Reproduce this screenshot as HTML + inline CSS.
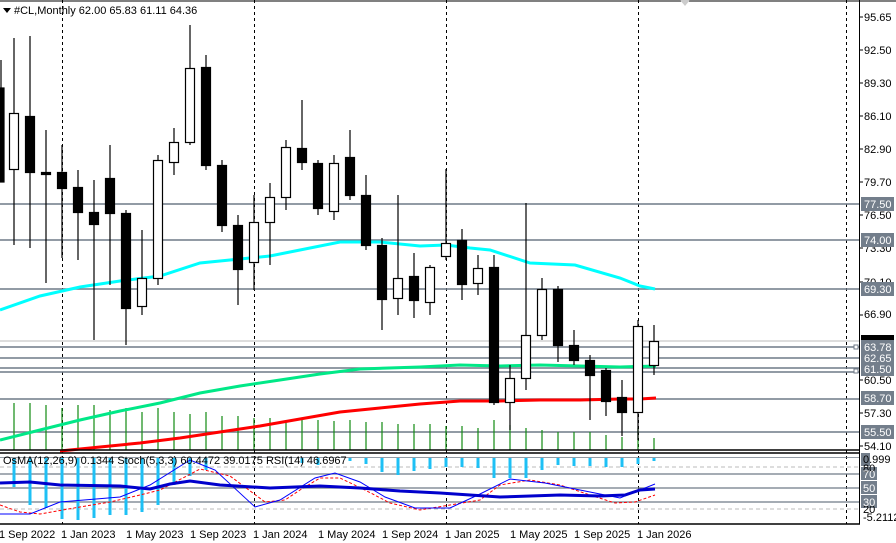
<!DOCTYPE html>
<html><head><meta charset="utf-8"><style>
html,body{margin:0;padding:0;background:#fff;}
svg{display:block;font-family:"Liberation Sans",sans-serif;font-size:11px;}
</style></head><body>
<svg width="896" height="543" viewBox="0 0 896 543" xmlns="http://www.w3.org/2000/svg">
<rect width="896" height="543" fill="#fff"/>
<!-- vertical dashed grid -->
<g stroke="#000" stroke-dasharray="3,3" stroke-width="1">
<line x1="62.5" y1="0" x2="62.5" y2="524"/>
<line x1="254.5" y1="0" x2="254.5" y2="524"/>
<line x1="446.5" y1="0" x2="446.5" y2="524"/>
<line x1="638.5" y1="0" x2="638.5" y2="524"/>
<line x1="846.5" y1="0" x2="846.5" y2="524"/>
</g>
<!-- horizontal level lines -->
<g stroke="#6f7a87" stroke-width="1.5">
<line x1="0" y1="204" x2="859" y2="204"/>
<line x1="0" y1="240" x2="859" y2="240"/>
<line x1="0" y1="289" x2="859" y2="289"/>
<line x1="0" y1="347" x2="859" y2="347"/>
<line x1="0" y1="358" x2="859" y2="358"/>
<line x1="0" y1="368" x2="859" y2="368"/>
<line x1="0" y1="372" x2="859" y2="372"/>
<line x1="0" y1="399" x2="859" y2="399"/>
<line x1="0" y1="432" x2="859" y2="432"/>
</g>
<line x1="0" y1="341" x2="859" y2="341" stroke="#bbb"/>
<rect x="854" y="345" width="4" height="4" fill="#fff" stroke="#6f7a87"/>
<rect x="854" y="369" width="4" height="4" fill="#fff" stroke="#6f7a87"/>
<!-- volume bars -->
<g stroke="#108a10" stroke-width="1.2">
<line x1="14" y1="450" x2="14" y2="403"/><line x1="30" y1="450" x2="30" y2="403"/><line x1="46" y1="450" x2="46" y2="405"/><line x1="62" y1="450" x2="62" y2="408"/><line x1="78" y1="450" x2="78" y2="405"/><line x1="94" y1="450" x2="94" y2="405"/><line x1="110" y1="450" x2="110" y2="410"/><line x1="126" y1="450" x2="126" y2="408"/><line x1="142" y1="450" x2="142" y2="412"/><line x1="158" y1="450" x2="158" y2="408"/><line x1="174" y1="450" x2="174" y2="412"/><line x1="190" y1="450" x2="190" y2="414"/><line x1="206" y1="450" x2="206" y2="412"/><line x1="222" y1="450" x2="222" y2="416"/><line x1="238" y1="450" x2="238" y2="416"/><line x1="254" y1="450" x2="254" y2="418"/><line x1="270" y1="450" x2="270" y2="418"/><line x1="286" y1="450" x2="286" y2="420"/><line x1="302" y1="450" x2="302" y2="420"/><line x1="318" y1="450" x2="318" y2="420"/><line x1="334" y1="450" x2="334" y2="421"/><line x1="350" y1="450" x2="350" y2="420"/><line x1="366" y1="450" x2="366" y2="422"/><line x1="382" y1="450" x2="382" y2="422"/><line x1="398" y1="450" x2="398" y2="424"/><line x1="414" y1="450" x2="414" y2="424"/><line x1="430" y1="450" x2="430" y2="424"/><line x1="446" y1="450" x2="446" y2="426"/><line x1="462" y1="450" x2="462" y2="426"/><line x1="478" y1="450" x2="478" y2="428"/><line x1="494" y1="450" x2="494" y2="420"/><line x1="510" y1="450" x2="510" y2="425"/><line x1="526" y1="450" x2="526" y2="428"/><line x1="542" y1="450" x2="542" y2="430"/><line x1="558" y1="450" x2="558" y2="432"/><line x1="574" y1="450" x2="574" y2="432"/><line x1="590" y1="450" x2="590" y2="432"/><line x1="606" y1="450" x2="606" y2="435"/><line x1="622" y1="450" x2="622" y2="437"/><line x1="638" y1="450" x2="638" y2="428"/><line x1="654" y1="450" x2="654" y2="438"/>
</g>
<!-- MAs -->
<polyline fill="none" stroke="#00ffff" stroke-width="3" points="0,310 40,296 80,287 120,281 160,276 200,263 240,259 270,256 300,250 340,242 380,242 420,246 446,245 470,248 490,250 530,263 575,265 620,278 640,286 655,289"/>
<polyline fill="none" stroke="#00e887" stroke-width="3" points="0,440 40,430 80,420 120,411 160,403 200,393 240,386 280,380 320,374 360,369 420,367 460,365 500,366 540,365 580,366 620,367 656,366"/>
<polyline fill="none" stroke="#ff0000" stroke-width="3" points="60,451 100,447 140,443 180,438 220,432 260,426 300,419 340,412 380,408 420,404 460,401 500,401 540,400 580,400 620,399 640,399 656,398"/>
<!-- candles -->
<g stroke="#000" stroke-width="1.2">
<line x1="1" y1="60" x2="1" y2="182"/><rect x="-4" y="88" width="8" height="94" fill="#000"/>
<line x1="14" y1="38" x2="14" y2="245"/><rect x="9.5" y="113.5" width="9" height="56" fill="#fff"/>
<line x1="30" y1="36" x2="30" y2="248"/><rect x="25.5" y="116.5" width="9" height="56" fill="#000"/>
<line x1="46" y1="130" x2="46" y2="283"/><rect x="41.5" y="172.5" width="9" height="2" fill="#000"/>
<line x1="62" y1="145" x2="62" y2="258"/><rect x="57.5" y="172.5" width="9" height="16" fill="#000"/>
<line x1="78" y1="170" x2="78" y2="260"/><rect x="73.5" y="187.5" width="9" height="25" fill="#000"/>
<line x1="94" y1="180" x2="94" y2="340"/><rect x="89.5" y="212.5" width="9" height="12" fill="#000"/>
<line x1="110" y1="145" x2="110" y2="285"/><rect x="105.5" y="178.5" width="9" height="35" fill="#000"/>
<line x1="126" y1="210" x2="126" y2="345"/><rect x="121.5" y="213.5" width="9" height="95" fill="#000"/>
<line x1="142" y1="230" x2="142" y2="315"/><rect x="137.5" y="278.5" width="9" height="28" fill="#fff"/>
<line x1="158" y1="155" x2="158" y2="285"/><rect x="153.5" y="160.5" width="9" height="118" fill="#fff"/>
<line x1="174" y1="128" x2="174" y2="175"/><rect x="169.5" y="142.5" width="9" height="20" fill="#fff"/>
<line x1="190" y1="25" x2="190" y2="145"/><rect x="185.5" y="68.5" width="9" height="74" fill="#fff"/>
<line x1="206" y1="55" x2="206" y2="170"/><rect x="201.5" y="67.5" width="9" height="98" fill="#000"/>
<line x1="222" y1="160" x2="222" y2="232"/><rect x="217.5" y="165.5" width="9" height="60" fill="#000"/>
<line x1="238" y1="215" x2="238" y2="305"/><rect x="233.5" y="225.5" width="9" height="44" fill="#000"/>
<line x1="254" y1="195" x2="254" y2="290"/><rect x="249.5" y="222.5" width="9" height="40" fill="#fff"/>
<line x1="270" y1="183" x2="270" y2="265"/><rect x="265.5" y="197.5" width="9" height="25" fill="#fff"/>
<line x1="286" y1="140" x2="286" y2="210"/><rect x="281.5" y="147.5" width="9" height="50" fill="#fff"/>
<line x1="302" y1="100" x2="302" y2="170"/><rect x="297.5" y="148.5" width="9" height="14" fill="#000"/>
<line x1="318" y1="160" x2="318" y2="215"/><rect x="313.5" y="163.5" width="9" height="45" fill="#000"/>
<line x1="334" y1="155" x2="334" y2="220"/><rect x="329.5" y="163.5" width="9" height="48" fill="#fff"/>
<line x1="350" y1="130" x2="350" y2="200"/><rect x="345.5" y="157.5" width="9" height="38" fill="#000"/>
<line x1="366" y1="175" x2="366" y2="250"/><rect x="361.5" y="195.5" width="9" height="50" fill="#000"/>
<line x1="382" y1="238" x2="382" y2="330"/><rect x="377.5" y="245.5" width="9" height="54" fill="#000"/>
<line x1="398" y1="195" x2="398" y2="315"/><rect x="393.5" y="278.5" width="9" height="20" fill="#fff"/>
<line x1="414" y1="253" x2="414" y2="318"/><rect x="409.5" y="276.5" width="9" height="24" fill="#000"/>
<line x1="430" y1="265" x2="430" y2="315"/><rect x="425.5" y="267.5" width="9" height="35" fill="#fff"/>
<line x1="446" y1="169" x2="446" y2="260"/><rect x="441.5" y="243.5" width="9" height="13" fill="#fff"/>
<line x1="462" y1="229" x2="462" y2="300"/><rect x="457.5" y="240.5" width="9" height="44" fill="#000"/>
<line x1="478" y1="255" x2="478" y2="295"/><rect x="473.5" y="268.5" width="9" height="15" fill="#fff"/>
<line x1="494" y1="255" x2="494" y2="405"/><rect x="489.5" y="267.5" width="9" height="135" fill="#000"/>
<line x1="510" y1="365" x2="510" y2="430"/><rect x="505.5" y="378.5" width="9" height="24" fill="#fff"/>
<line x1="526" y1="203" x2="526" y2="390"/><rect x="521.5" y="335.5" width="9" height="43" fill="#fff"/>
<line x1="542" y1="278" x2="542" y2="340"/><rect x="537.5" y="289.5" width="9" height="46" fill="#fff"/>
<line x1="558" y1="286" x2="558" y2="362"/><rect x="553.5" y="289.5" width="9" height="56" fill="#000"/>
<line x1="574" y1="330" x2="574" y2="365"/><rect x="569.5" y="345.5" width="9" height="15" fill="#000"/>
<line x1="590" y1="355" x2="590" y2="420"/><rect x="585.5" y="360.5" width="9" height="15" fill="#000"/>
<line x1="606" y1="368" x2="606" y2="416"/><rect x="601.5" y="370.5" width="9" height="31" fill="#000"/>
<line x1="622" y1="380" x2="622" y2="436"/><rect x="617.5" y="397.5" width="9" height="15" fill="#000"/>
<line x1="638" y1="320" x2="638" y2="440"/><rect x="633.5" y="326.5" width="9" height="86" fill="#fff"/>
<line x1="654" y1="325" x2="654" y2="375"/><rect x="649.5" y="341.5" width="9" height="24" fill="#fff"/>
</g>
<!-- frame -->
<line x1="0" y1="1" x2="896" y2="1" stroke="#000"/>
<line x1="859.5" y1="0" x2="859.5" y2="524" stroke="#000"/>
<line x1="0" y1="450" x2="860" y2="450" stroke="#000" stroke-width="1.5"/>
<line x1="0" y1="453" x2="860" y2="453" stroke="#000" stroke-width="1.5"/>
<line x1="0" y1="524" x2="860" y2="524" stroke="#000" stroke-width="1.5"/>
<polygon points="680,0 690,0 685,6" fill="#ccc"/>
<!-- title -->
<polygon points="3,8 11,8 7,13" fill="#000"/>
<text x="14" y="14" fill="#000">#CL,Monthly  62.00 65.83 61.11 64.36</text>
<!-- right axis -->
<g fill="#000">
<text x="864" y="21">95.65</text><text x="864" y="54">92.50</text><text x="864" y="87">89.30</text><text x="864" y="120">86.10</text><text x="864" y="153">82.90</text><text x="864" y="186">79.70</text><text x="864" y="219">76.50</text><text x="864" y="252">73.30</text><text x="864" y="286">70.10</text><text x="864" y="318">66.90</text><text x="864" y="384">60.50</text><text x="864" y="417">57.30</text><text x="864" y="450">54.10</text>
</g>
<g stroke="#000"><line x1="859" y1="17" x2="863" y2="17"/><line x1="859" y1="50" x2="863" y2="50"/><line x1="859" y1="83" x2="863" y2="83"/><line x1="859" y1="116" x2="863" y2="116"/><line x1="859" y1="149" x2="863" y2="149"/><line x1="859" y1="182" x2="863" y2="182"/><line x1="859" y1="215" x2="863" y2="215"/><line x1="859" y1="248" x2="863" y2="248"/><line x1="859" y1="282" x2="863" y2="282"/><line x1="859" y1="315" x2="863" y2="315"/><line x1="859" y1="380" x2="863" y2="380"/><line x1="859" y1="413" x2="863" y2="413"/><line x1="859" y1="446" x2="863" y2="446"/></g>
<rect x="861" y="335" width="33" height="10" fill="#000"/>
<g fill="#737e8b">
<rect x="861" y="197" width="33" height="14"/><rect x="861" y="233" width="33" height="14"/><rect x="861" y="282" width="33" height="14"/><rect x="861" y="340" width="33" height="14"/><rect x="861" y="351" width="33" height="14"/><rect x="861" y="362" width="33" height="14"/><rect x="861" y="391" width="33" height="14"/><rect x="861" y="425" width="33" height="14"/>
</g>
<g fill="#fff">
<text x="864" y="208">77.50</text><text x="864" y="244">74.00</text><text x="864" y="293">69.30</text><text x="864" y="351">63.78</text><text x="864" y="362">62.65</text><text x="864" y="373">61.50</text><text x="864" y="402">58.70</text><text x="864" y="436">55.50</text>
</g>
<!-- indicator pane -->
<g stroke="#bbb" stroke-dasharray="4,3"><line x1="0" y1="467" x2="859" y2="467"/><line x1="0" y1="509" x2="859" y2="509"/></g>
<g stroke="#6f7a87" stroke-width="1.2"><line x1="0" y1="474" x2="859" y2="474"/><line x1="0" y1="488" x2="859" y2="488"/><line x1="0" y1="502" x2="859" y2="502"/></g>
<line x1="0" y1="457.5" x2="859" y2="457.5" stroke="#6f7a87" stroke-width="0.8"/>
<g stroke="#1ec0f5" stroke-width="3">
<line x1="14" y1="458" x2="14" y2="487"/><line x1="30" y1="458" x2="30" y2="505"/><line x1="46" y1="458" x2="46" y2="508"/><line x1="62" y1="458" x2="62" y2="519"/><line x1="78" y1="458" x2="78" y2="520"/><line x1="94" y1="458" x2="94" y2="518"/><line x1="110" y1="458" x2="110" y2="515"/><line x1="126" y1="458" x2="126" y2="515"/><line x1="142" y1="458" x2="142" y2="512"/><line x1="158" y1="458" x2="158" y2="505"/><line x1="174" y1="458" x2="174" y2="485"/><line x1="190" y1="458" x2="190" y2="476"/><line x1="206" y1="458" x2="206" y2="470"/><line x1="302" y1="458" x2="302" y2="463"/><line x1="318" y1="458" x2="318" y2="465"/><line x1="350" y1="458" x2="350" y2="461"/><line x1="366" y1="458" x2="366" y2="464"/><line x1="382" y1="458" x2="382" y2="472"/><line x1="398" y1="458" x2="398" y2="475"/><line x1="414" y1="458" x2="414" y2="471"/><line x1="430" y1="458" x2="430" y2="469"/><line x1="446" y1="458" x2="446" y2="467"/><line x1="462" y1="458" x2="462" y2="467"/><line x1="478" y1="458" x2="478" y2="468"/><line x1="494" y1="458" x2="494" y2="478"/><line x1="510" y1="458" x2="510" y2="478"/><line x1="526" y1="458" x2="526" y2="478"/><line x1="542" y1="458" x2="542" y2="470"/><line x1="558" y1="458" x2="558" y2="465"/><line x1="574" y1="458" x2="574" y2="466"/><line x1="590" y1="458" x2="590" y2="466"/><line x1="606" y1="458" x2="606" y2="467"/><line x1="622" y1="458" x2="622" y2="467"/><line x1="638" y1="458" x2="638" y2="464"/><line x1="654" y1="458" x2="654" y2="461"/>
</g>
<polyline fill="none" stroke="#ff0000" stroke-width="1" stroke-dasharray="3,2" points="0,505 20,512 40,514 80,507 110,502 140,495 160,490 200,469 230,476 265,502 285,500 300,490 320,478 340,478 365,490 390,503 420,510 450,505 480,500 500,485 530,480 560,485 590,495 615,503 635,502 655,495"/>
<polyline fill="none" stroke="#0000ff" stroke-width="1" points="0,514 30,514 60,502 120,497 150,485 190,460 215,470 255,507 280,500 315,478 335,473 360,482 385,497 415,508 450,508 480,494 510,479 545,483 575,489 600,494 620,498 655,484"/>
<polyline fill="none" stroke="#0000cc" stroke-width="3" points="0,483 30,482 60,485 120,486 150,489 170,484 190,481 220,485 270,488 320,486 360,488 400,491 440,493 470,495 500,497 560,495 600,496 625,495 640,490 655,489"/>
<text x="3" y="464" fill="#000">OsMA(12,26,9) 0.1344  Stoch(5,3,3) 60.4472 39.0175  RSI(14) 46.6967</text>
<g fill="#737e8b"><rect x="861" y="453" width="9" height="13"/><rect x="861" y="467" width="16" height="13"/><rect x="861" y="481" width="16" height="13"/><rect x="861" y="495" width="16" height="13"/></g>
<g fill="#000"><text x="863" y="463">0.999</text><text x="863" y="472">80</text><text x="863" y="513">20</text><text x="863" y="521">-5.2112</text></g>
<g fill="#fff"><text x="863" y="478">70</text><text x="863" y="492">50</text><text x="863" y="506">30</text></g>
<!-- date axis -->
<g fill="#000">
<text x="-1" y="538">1 Sep 2022</text><text x="61" y="538">1 Jan 2023</text><text x="126" y="538">1 May 2023</text><text x="190" y="538">1 Sep 2023</text><text x="253" y="538">1 Jan 2024</text><text x="318" y="538">1 May 2024</text><text x="382" y="538">1 Sep 2024</text><text x="445" y="538">1 Jan 2025</text><text x="510" y="538">1 May 2025</text><text x="574" y="538">1 Sep 2025</text><text x="637" y="538">1 Jan 2026</text>
</g>
</svg>
</body></html>
